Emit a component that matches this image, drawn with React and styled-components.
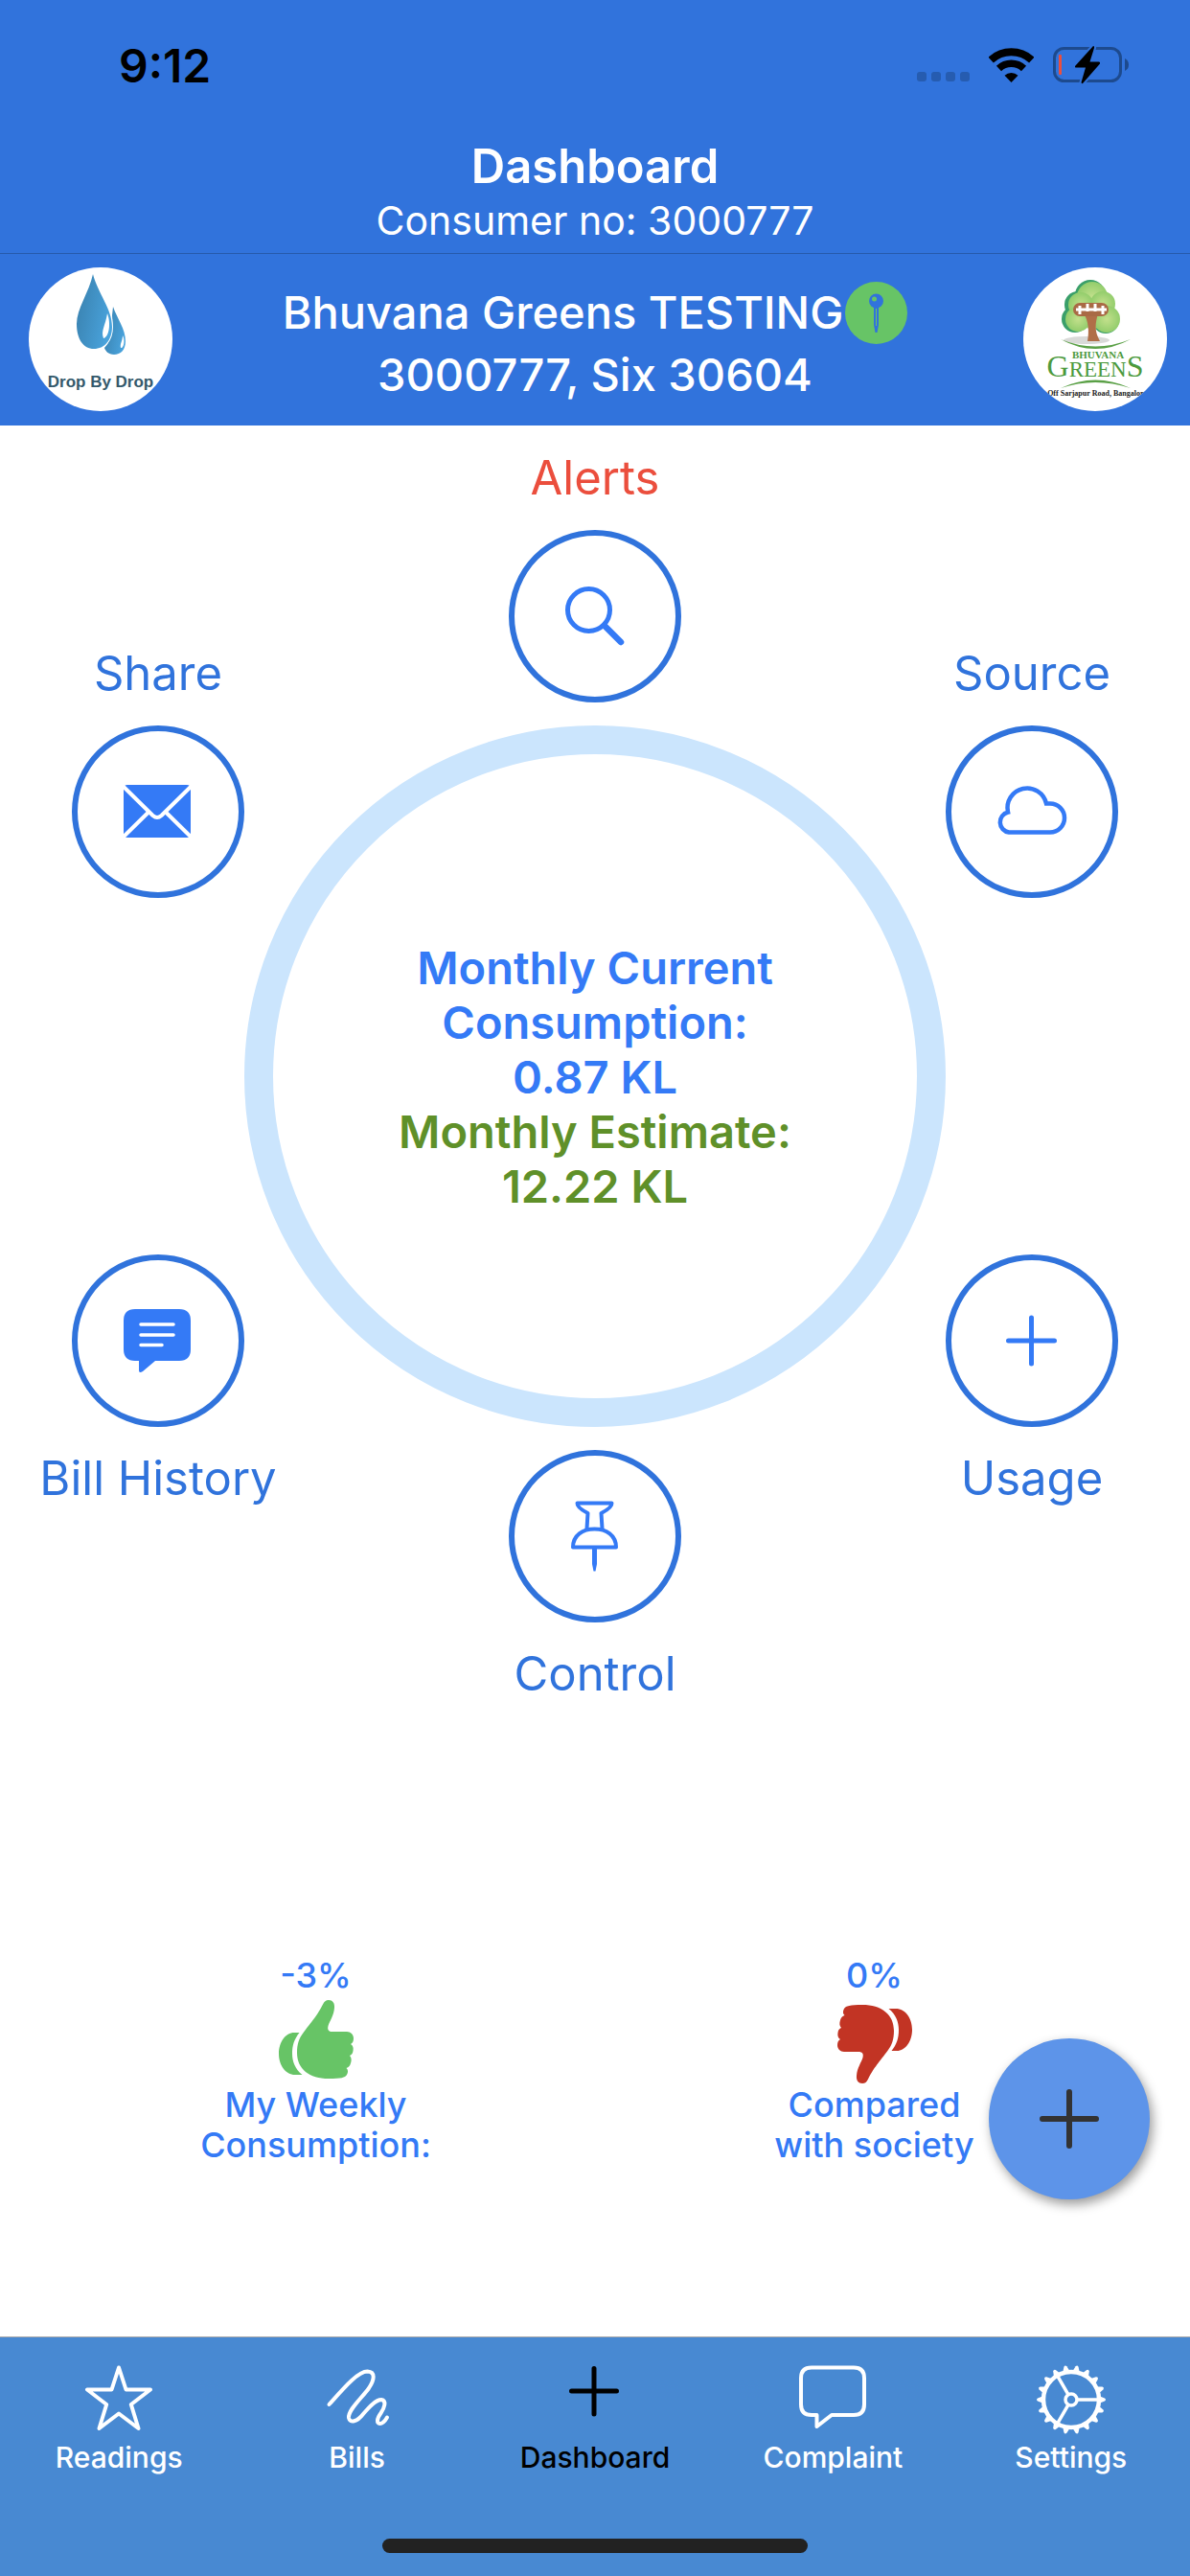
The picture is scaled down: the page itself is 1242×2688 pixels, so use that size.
import React from "react";
import styled, { createGlobalStyle } from "styled-components";

const colors = {
	header: "#3173dc",
	tabBar: "#4889d2",
	outline: "#3073dc",
	accent: "#347af6",
	ring: "#cbe5fd",
	alert: "#eb4e3d",
	estimate: "#5f9029",
	good: "#67c466",
	bad: "#c23424",
	fab: "#5d94e9",
};

const GlobalStyle = createGlobalStyle`
	* {
		box-sizing: border-box;
	}

	body {
		margin: 0;
		background-color: #ffffff;
		font-family: Inter, "Liberation Sans", sans-serif;
	}

	h1, h2, p {
		margin: 0;
	}

	svg {
		display: block;
	}
`;

const Page = styled.div`
	min-height: 100vh;
	display: flex;
	flex-direction: column;
`;

const StatusBar = styled.div`
	height: 132px;
	padding: 4px 64px 0 124px;
	display: flex;
	align-items: center;
	justify-content: space-between;
	background-color: ${colors.header};
`;

const Clock = styled.span`
	font-size: 48px;
	font-weight: 600;
`;

const StatusIcons = styled.div`
	display: flex;
	align-items: center;
	gap: 20px;
`;

const NavHeader = styled.header`
	padding: 12px 0 8px;
	text-align: center;
	color: #ffffff;
	background-color: ${colors.header};
	border-bottom: 1px solid #265aab;
`;

const Title = styled.h1`
	font-size: 49px;
	font-weight: 600;
	line-height: 60px;
`;

const Subtitle = styled.p`
	font-size: 41px;
	line-height: 52px;
`;

const SocietyBar = styled.section`
	padding: 14px 24px 15px 30px;
	display: flex;
	align-items: center;
	justify-content: space-between;
	color: #ffffff;
	background-color: ${colors.header};
`;

const Logo = styled.div`
	width: 150px;
	height: 150px;
	flex-shrink: 0;
	border-radius: 50%;
	overflow: hidden;
	background-color: #ffffff;
`;

const SocietyText = styled.div`
	padding: 8px 6px 0 0;
	font-size: 47px;
	font-weight: 500;
	line-height: 64px;
	text-align: center;
`;

const SocietyName = styled.h2`
	display: flex;
	align-items: center;
	justify-content: center;
	gap: 2px;
	font-size: inherit;
	font-weight: inherit;
`;

const Main = styled.main`
	flex: 1;
	position: relative;
	display: flex;
	flex-direction: column;
	justify-content: space-between;
	padding: 25px 0 179px;
`;

const Wheel = styled.section`
	display: flex;
	justify-content: center;
`;

const SideColumn = styled.div`
	width: 180px;
	padding: 204px 0;
	display: flex;
	flex-direction: column;
	justify-content: space-between;
`;

const CenterColumn = styled.div`
	display: flex;
	flex-direction: column;
	align-items: center;
	gap: 24px;
`;

const HubButton = styled.button`
	width: 180px;
	padding: 0;
	border: 0;
	display: flex;
	flex-direction: ${(props) => (props.$labelBelow ? "column-reverse" : "column")};
	align-items: center;
	gap: 24px;
	background: none;
	font-family: inherit;
	font-size: 49px;
	line-height: 60px;
	white-space: nowrap;
	color: ${(props) => props.$color || colors.outline};
`;

const HubCircle = styled.span`
	width: 180px;
	height: 180px;
	border: 6px solid ${colors.outline};
	border-radius: 50%;
	display: flex;
	align-items: center;
	justify-content: center;
	color: ${colors.accent};
`;

const Ring = styled.div`
	width: 732px;
	height: 732px;
	border: 30px solid ${colors.ring};
	border-radius: 50%;
	display: flex;
	flex-direction: column;
	align-items: center;
	justify-content: center;
	text-align: center;
`;

const RingText = styled.p`
	max-width: 440px;
	font-size: 47px;
	font-weight: 600;
	line-height: 57px;
	color: ${(props) => props.$color};
`;

const Stats = styled.section`
	padding: 0 38px;
	display: grid;
	grid-template-columns: 1fr 1fr;
`;

const Stat = styled.div`
	display: flex;
	flex-direction: column;
	align-items: center;
	font-size: 36px;
	font-weight: 500;
	line-height: 42px;
	text-align: center;
	color: ${colors.accent};
`;

const StatLabel = styled.p`
	max-width: 260px;
`;

const Fab = styled.button`
	position: absolute;
	right: 42px;
	bottom: 143px;
	width: 168px;
	height: 168px;
	padding: 0;
	border: 0;
	border-radius: 50%;
	display: flex;
	align-items: center;
	justify-content: center;
	background-color: ${colors.fab};
	box-shadow: 3px 5px 12px rgba(0, 0, 0, 0.4);
`;

const Footer = styled.footer`
	padding-bottom: 24px;
	border-top: 1px solid #a9a9ab;
	background-color: ${colors.tabBar};
`;

const Tabs = styled.nav`
	display: grid;
	grid-template-columns: repeat(5, 1fr);
`;

const Tab = styled.a`
	padding-top: 29px;
	display: flex;
	flex-direction: column;
	align-items: center;
	gap: 6px;
	font-size: 30px;
	font-weight: 500;
	line-height: 36px;
	text-decoration: none;
	color: ${(props) => (props.$active ? "#000000" : "#ffffff")};
`;

const HomeIndicator = styled.div`
	width: 444px;
	height: 15px;
	margin: 67px auto 0;
	border-radius: 8px;
	background-color: #222222;
`;

const StatusGlyphs = () => (
	<StatusIcons>
		<svg width="55" height="38" viewBox="0 0 55 38" fill="#265cb0">
			{[0, 15, 30, 45].map((x) => (
				<rect key={x} x={x} y="26" width="10" height="10" rx="3" />
			))}
		</svg>
		<svg width="47" height="38" viewBox="0 0 47 38" fill="none" stroke="#000">
			<path d="M2.2 13.6a31.5 31.5 0 0 1 42.6 0" strokeWidth="8" />
			<path d="M10.5 22.5a19 19 0 0 1 26 0" strokeWidth="7.5" />
			<path d="M23.5 37L16.5 29.8a10 10 0 0 1 14 0z" fill="#000" stroke="none" />
		</svg>
		<svg width="79" height="40" viewBox="0 0 79 40">
			<rect x="1.5" y="2.5" width="69" height="34" rx="10" fill="none" stroke="#1d4a8e" strokeWidth="3" />
			<path d="M75 13q4 2 4 6.500t-4 6.500z" fill="#1d4a8e" />
			<rect x="6" y="9" width="3" height="21" rx="1" fill="#eb4e3d" />
			<path
				d="M42 0L23 21Q22.500 22.500 24 22.500H34L29.500 38Q30 40 31.500 38.500L49 18.500Q49.500 16.500 48 16.500H38.500L43 2Q43.500 0 42 0Z"
				fill="#000"
				stroke={colors.header}
				strokeWidth="4"
				paintOrder="stroke"
			/>
		</svg>
	</StatusIcons>
);

const DropLogo = () => (
	<svg width="150" height="150" viewBox="0 0 150 150" role="img" aria-label="Drop By Drop">
		<defs>
			<linearGradient id="drop" x1="0" y1="0.3" x2="1" y2="0.7">
				<stop offset="0" stopColor="#3a82b0" />
				<stop offset="1" stopColor="#4aa5df" />
			</linearGradient>
		</defs>
		<path d="M88 41C92 53 101 64 101 77C101 86 96 91 89 91C83 91 80 87 79 84C87 76 88 62 87 50Z" fill="url(#drop)" />
		<path
			d="M67 7C72 27 87 43 87 62C87 76 79 85 68 85C57 85 50 75 50 59C50 43 63 26 67 7Z"
			fill="url(#drop)"
			stroke="#fff"
			strokeWidth="2"
			paintOrder="stroke"
		/>
		<path d="M82 48C86 58 84 73 78 74C75 66 80 61 82 48Z" fill="#fff" />
		<path d="M98 71C101 76 99 85 96 84C95 79 98 77 98 71Z" fill="#fff" />
		<text
			x="75"
			y="125"
			textAnchor="middle"
			fontFamily="Liberation Sans, sans-serif"
			fontSize="17"
			fontWeight="700"
			fill="#34596b">
			Drop By Drop
		</text>
	</svg>
);

const GreensLogo = () => (
	<svg width="150" height="150" viewBox="0 0 150 150" role="img" aria-label="Bhuvana Greens">
		<defs>
			<radialGradient id="leaf">
				<stop offset="0" stopColor="#c3e08c" />
				<stop offset="1" stopColor="#93cd6c" />
			</radialGradient>
		</defs>
		<ellipse cx="66" cy="76" rx="24" ry="4" fill="#d9dad8" />
		<g fill="#3a9f6a">
			<circle cx="70" cy="29" r="16" />
			<circle cx="57" cy="39" r="14" />
			<circle cx="54" cy="54" r="14" />
			<circle cx="86" cy="55" r="14" />
		</g>
		<circle cx="72" cy="46" r="18" fill="#a8d67a" />
		<g fill="url(#leaf)">
			<circle cx="72" cy="31" r="16" />
			<circle cx="60" cy="39" r="13" />
			<circle cx="83" cy="38" r="13" />
			<circle cx="57" cy="54" r="13" />
			<circle cx="87" cy="54" r="14" />
		</g>
		<path d="M63 48H78C75 59 74 66 80 77H67C69 66 68 56 63 48Z" fill="#b06f48" />
		<rect x="52" y="37" width="37" height="14" rx="7" fill="#a96a45" />
		<path
			d="M55 44H87M59 40v9M67 38v8M75 38v8M83 40v9"
			stroke="#fff"
			strokeWidth="3"
			fill="none"
		/>
		<path d="M39 75Q75 90 112 75Q75 95 39 75Z" fill="#5aa046" />
		<path d="M39 126Q75 109 112 126Q75 114 39 126Z" fill="#5aa046" />
		<g fontFamily="Liberation Serif, serif" textAnchor="middle" fill="#4c9a3d">
			<text x="78" y="95" fontSize="11" fontWeight="700">
				BHUVANA
			</text>
			<text x="75" y="114" fontSize="32">
				G<tspan fontSize="23">REEN</tspan>S
			</text>
			<text x="77" y="134" fontSize="8" fontWeight="700" fill="#222">
				Off Sarjapur Road, Bangalore
			</text>
		</g>
	</svg>
);

const PinBadge = () => (
	<svg width="65" height="65" viewBox="0 0 65 65">
		<circle cx="32.500" cy="32.500" r="32.500" fill={colors.good} />
		<circle cx="32.500" cy="20" r="7.500" fill={colors.header} />
		<circle cx="30.500" cy="18" r="2.500" fill={colors.good} />
		<path d="M30 26H35V45L33.500 53H31.500L30 45Z" fill={colors.header} />
		<path d="M32.500 28V46" stroke={colors.good} strokeWidth="1" />
	</svg>
);

const HubSvg = ({ children }) => (
	<svg
		width="80"
		height="80"
		viewBox="0 0 80 80"
		fill="none"
		stroke="currentColor"
		strokeWidth="5"
		strokeLinecap="round"
		strokeLinejoin="round">
		{children}
	</svg>
);

const SearchIcon = () => (
	<HubSvg>
		<circle cx="33.500" cy="33.500" r="22" />
		<path d="M50 50L67 67" strokeWidth="6.500" />
	</HubSvg>
);

const MailIcon = () => (
	<HubSvg>
		<rect x="4" y="12" width="70" height="55" rx="4" fill="currentColor" stroke="none" />
		<g stroke="#fff" strokeWidth="4" strokeLinecap="butt">
			<path d="M3 13L34.500 44Q39 48 43.500 44L75 13" />
			<path d="M3 67L31 39.500M75 67L47 39.500" />
		</g>
	</HubSvg>
);

const CloudIcon = () => (
	<HubSvg>
		<path
			d="M16 61.500H59a15 15 0 0 0 0-30h-4A20.500 20.500 0 0 0 15 40.500A10.700 10.700 0 0 0 16 61.500z"
			strokeWidth="4.500"
			strokeLinejoin="miter"
		/>
	</HubSvg>
);

const BillIcon = () => (
	<HubSvg>
		<path
			d="M16 7H62Q74 7 74 19V49Q74 61 62 61H37L24 72Q20 74.500 20 71V61H16Q4 61 4 49V19Q4 7 16 7Z"
			fill="currentColor"
			stroke="none"
		/>
		<path d="M22 23H56M22 34H56M22 44.500H44" stroke="#fff" strokeWidth="3.500" />
	</HubSvg>
);

const PlusIcon = () => (
	<HubSvg>
		<path d="M39.500 16V64M15.500 40H63.500" />
	</HubSvg>
);

const ControlIcon = () => (
	<HubSvg>
		<g strokeWidth="4">
			<path d="M31.500 32L32.500 16Q21 10 21.500 5.500H57.500Q58 10 46.500 16L47.500 32" />
			<path d="M17 51.500C17 39 27 32.500 39.500 32.500C52 32.500 62 39 62 51.500Z" />
		</g>
		<path d="M37 53H42V69L40.500 76.500H38.500L37 69Z" fill="currentColor" stroke="none" />
	</HubSvg>
);

const ThumbIcon = ({ down }) => (
	<svg width="78" height="93" viewBox="0 0 78 93" fill={down ? colors.bad : colors.good}>
		<g transform={down ? "translate(78 92) rotate(180)" : "translate(0 5)"}>
			<path d="M52 0C56 0 58.500 3 58 8C57.500 16 53 22 51.500 27C50.500 31 52 33 56 33H71C75 33 78 36 78 40C78 43 77 45 75 46C77.500 47.500 78 50 77.500 53C77 56 76 57 74 58C76 60 76 63 75 66C74 69 73 70 70.500 71C72.500 73 72.500 75 71 78C69 81 65 82 52 82C32 82 19 72 19 55C19 46 21 40 26 33.500C37 19 40 16 46 4.500C47.500 1.500 49 0 52 0Z" />
			<path d="M21.500 34H16C7 34 0 44 0 56C0 68 7 78 17 78H24.500C17 72 14 64 14 56C14 47 16 41 21.500 34Z" />
		</g>
	</svg>
);

const TabSvg = ({ children }) => (
	<svg
		width="72"
		height="72"
		viewBox="0 0 72 72"
		fill="none"
		stroke="currentColor"
		strokeWidth="4"
		strokeLinecap="round"
		strokeLinejoin="round">
		{children}
	</svg>
);

const StarIcon = () => (
	<TabSvg>
		<path d="M36 2.500L43.500 25.500H69L48.800 41L56.500 66L36 50.500L15.500 66L23.200 41L3 25.500H28.500Z" />
	</TabSvg>
);

const ScribbleIcon = () => (
	<TabSvg>
		<path d="M6.500 41C20 26 36 6.500 46.500 6.500C55 7 54 15 48 24C40 35 26 47 27 55C28 61 36 59 42 51C48 44 55 36 61 36C67 37 64 45 60.500 50C56 56 56 61 59.500 61C63 61 65 58 67 54.500" />
	</TabSvg>
);

const TabPlusIcon = () => (
	<TabSvg>
		<path d="M35 3.500V51M11.500 27H58.500" strokeWidth="5" />
	</TabSvg>
);

const ChatIcon = () => (
	<TabSvg>
		<path d="M14 2.500H58Q69 2.500 69 13.500V41Q69 52 58 52H35L19.500 64V52H14Q3 52 3 41V13.500Q3 2.500 14 2.500Z" />
	</TabSvg>
);

const GearIcon = () => (
	<TabSvg>
		<circle cx="36" cy="36" r="29" strokeWidth="4.500" />
		<circle cx="36" cy="36" r="6" strokeWidth="3.500" />
		{[0, 120, 240].map((angle) => (
			<path key={angle} d="M43 36H65" strokeWidth="3.500" transform={`rotate(${angle} 36 36)`} />
		))}
		{Array.from({ length: 18 }, (_, i) => (
			<path
				key={i}
				d="M66 32.500L71 34.500Q73 36 71 37.500L66 39.500Z"
				fill="currentColor"
				stroke="none"
				transform={`rotate(${i * 20} 36 36)`}
			/>
		))}
	</TabSvg>
);

const HubItem = ({ label, icon, labelBelow, color }) => (
	<HubButton type="button" $labelBelow={labelBelow} $color={color}>
		<span>{label}</span>
		<HubCircle>{icon}</HubCircle>
	</HubButton>
);

const tabs = [
	{ label: "Readings", icon: <StarIcon /> },
	{ label: "Bills", icon: <ScribbleIcon /> },
	{ label: "Dashboard", icon: <TabPlusIcon />, active: true },
	{ label: "Complaint", icon: <ChatIcon /> },
	{ label: "Settings", icon: <GearIcon /> },
];

export default function App() {
	return (
		<Page>
			<GlobalStyle />
			<StatusBar>
				<Clock>9:12</Clock>
				<StatusGlyphs />
			</StatusBar>
			<NavHeader>
				<Title>Dashboard</Title>
				<Subtitle>Consumer no: 3000777</Subtitle>
			</NavHeader>
			<SocietyBar>
				<Logo>
					<DropLogo />
				</Logo>
				<SocietyText>
					<SocietyName>
						Bhuvana Greens TESTING
						<PinBadge />
					</SocietyName>
					<p>3000777, Six 30604</p>
				</SocietyText>
				<Logo>
					<GreensLogo />
				</Logo>
			</SocietyBar>

			<Main>
				<Wheel>
					<SideColumn>
						<HubItem label="Share" icon={<MailIcon />} />
						<HubItem label="Bill History" icon={<BillIcon />} labelBelow />
					</SideColumn>
					<CenterColumn>
						<HubItem label="Alerts" icon={<SearchIcon />} color={colors.alert} />
						<Ring>
							<RingText $color={colors.accent}>Monthly Current Consumption:</RingText>
							<RingText $color={colors.accent}>0.87 KL</RingText>
							<RingText $color={colors.estimate}>Monthly Estimate:</RingText>
							<RingText $color={colors.estimate}>12.22 KL</RingText>
						</Ring>
						<HubItem label="Control" icon={<ControlIcon />} labelBelow />
					</CenterColumn>
					<SideColumn>
						<HubItem label="Source" icon={<CloudIcon />} />
						<HubItem label="Usage" icon={<PlusIcon />} labelBelow />
					</SideColumn>
				</Wheel>

				<Stats>
					<Stat>
						<p>-3%</p>
						<ThumbIcon />
						<StatLabel>My Weekly Consumption:</StatLabel>
					</Stat>
					<Stat>
						<p>0%</p>
						<ThumbIcon down />
						<StatLabel>Compared with society</StatLabel>
					</Stat>
				</Stats>

				<Fab type="button" aria-label="Add">
					<svg width="62" height="62" viewBox="0 0 62 62" stroke="#333" strokeWidth="6" strokeLinecap="round">
						<path d="M31 3V59M3 31H59" />
					</svg>
				</Fab>
			</Main>

			<Footer>
				<Tabs>
					{tabs.map((tab) => (
						<Tab key={tab.label} href="#" $active={tab.active}>
							{tab.icon}
							{tab.label}
						</Tab>
					))}
				</Tabs>
				<HomeIndicator />
			</Footer>
		</Page>
	);
}
